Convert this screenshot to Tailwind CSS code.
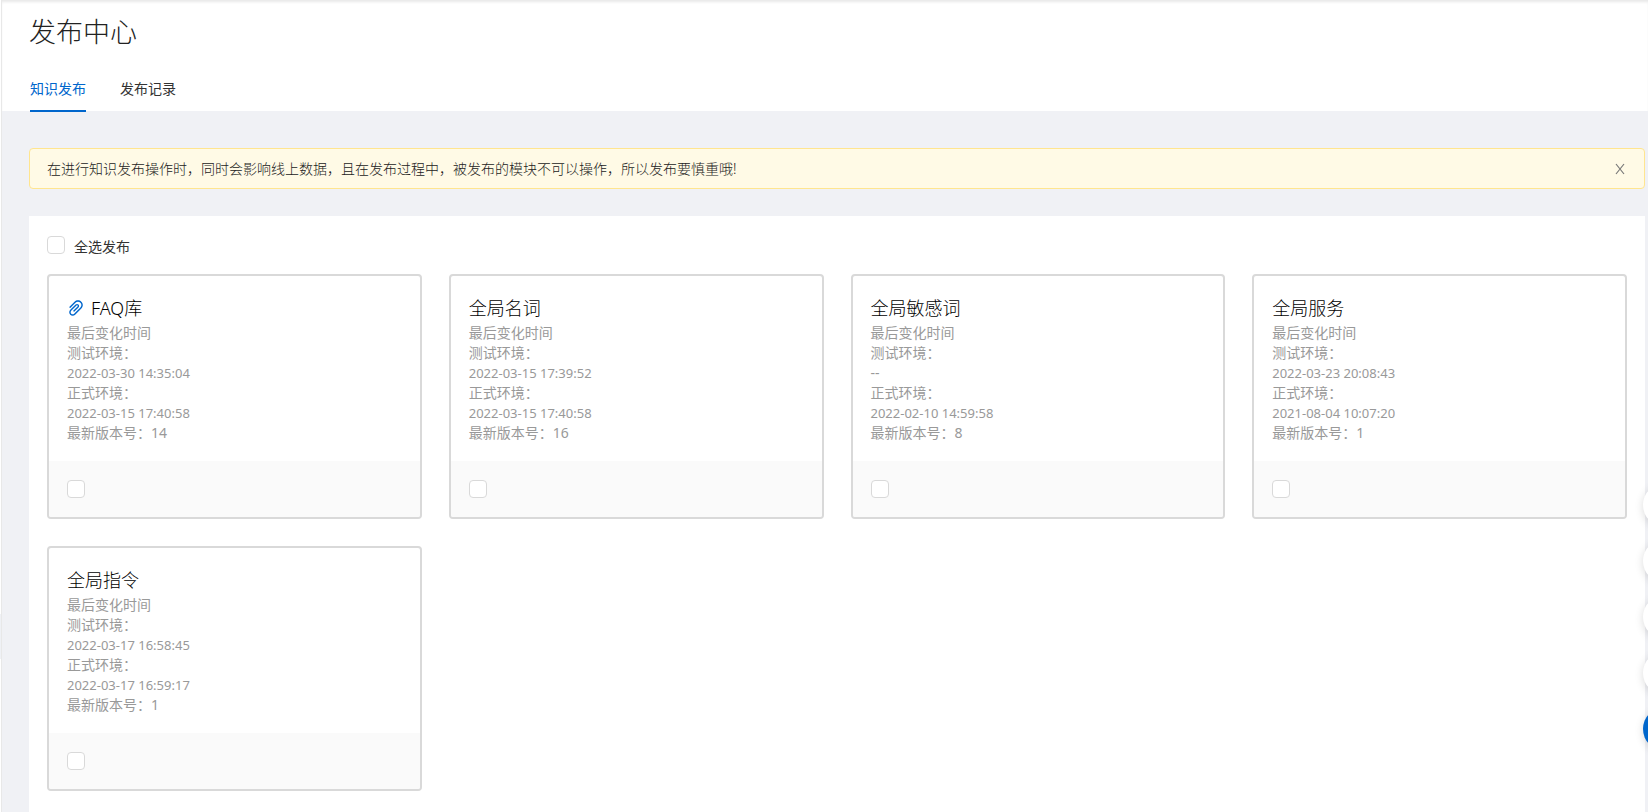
<!DOCTYPE html>
<html lang="zh-CN">
<head>
<meta charset="utf-8">
<title>发布中心</title>
<script src="https://cdn.jsdelivr.net/npm/@tailwindcss/browser@4"></script>
</head>
<body class="relative flex min-h-screen overflow-x-hidden bg-white font-['Noto_Sans','Noto_Sans_CJK_SC',sans-serif] text-sm text-[#333]">
  <!-- collapsed sidebar edge with its handle -->
  <aside class="flex w-0.5 shrink-0 flex-col border-r border-[#e8e8e8] pt-[614px]">
    <div class="h-[45px] bg-[#eff1f5]"></div>
  </aside>

  <div class="flex min-w-0 flex-1 flex-col bg-[#f0f1f5]">
    <header class="bg-white pr-7 pl-[27px] shadow-[inset_0_3px_3px_-1px_#e8e8e8]">
      <h1 class="pt-3 text-[27px] leading-10 font-light text-[#222]">发布中心</h1>
      <nav class="mt-[18px] flex h-[41px] gap-[34px] pl-px">
        <a href="#publish" class="-mb-px h-[42px] border-b-2 border-[#0066cc] pt-[9px] leading-5 text-[#0066cc]">知识发布</a>
        <a href="#records" class="h-[42px] pt-[9px] leading-5">发布记录</a>
      </nav>
    </header>

    <main class="flex flex-1 flex-col gap-[27px] pt-[37px] pr-[3px] pl-[27px]">
      <div role="alert" class="flex h-[41px] items-center justify-between rounded border border-[#ffe58f] bg-[#fffae6] pr-[18px] pl-[17px] text-[#222]">
        <p class="leading-5 font-light">在进行知识发布操作时，同时会影响线上数据，且在发布过程中，被发布的模块不可以操作，所以发布要慎重哦!</p>
        <button type="button" aria-label="关闭" class="text-[#777]">
          <svg class="size-3" viewBox="0 0 12 12" fill="none" stroke="currentColor" stroke-width="1.2"><path d="M2 1l8 10M10 1L2 11"/></svg>
        </button>
      </div>

      <section class="flex-1 bg-white px-[18px] pt-5 pb-5">
        <div class="flex h-[38px] items-start gap-[9px]">
          <input id="all" type="checkbox" class="size-[18px] appearance-none rounded border border-[#d9d9d9] bg-white">
          <label for="all" class="pt-px leading-5">全选发布</label>
        </div>

        <div class="grid grid-cols-4 gap-[27px]">
          <article class="overflow-hidden rounded border-2 border-[#d9d9d9]">
            <div class="px-[18px] py-[18px] leading-5 text-[#999]">
              <h2 class="mb-px flex items-center gap-[6px] text-lg leading-7 font-light text-black">
                <svg class="size-[18px] text-[#0066cc]" viewBox="64 64 896 896" fill="currentColor"><path d="M779.3 196.6c-94.2-94.2-247.6-94.2-341.7 0l-261 260.8c-1.7 1.7-2.6 4-2.6 6.4s.9 4.7 2.6 6.4l36.9 36.9a9 9 0 0 0 12.7 0l261-260.8c32.4-32.4 75.5-50.2 121.3-50.2s88.9 17.8 121.2 50.2c32.4 32.4 50.2 75.5 50.2 121.2 0 45.8-17.8 88.8-50.2 121.2l-266 265.9-43.1 43.1c-40.3 40.3-105.8 40.3-146.1 0-19.5-19.5-30.2-45.4-30.2-73s10.700-53.500 30.200-73l263.900-263.800c6.700-6.600 15.500-10.300 24.900-10.300h.1c9.400 0 18.100 3.700 24.700 10.300 6.700 6.700 10.300 15.500 10.300 24.900 0 9.300-3.700 18.100-10.300 24.700L372.400 653c-1.700 1.700-2.600 4-2.600 6.400s.9 4.700 2.600 6.400l36.900 36.900a9 9 0 0 0 12.700 0l215.600-215.600c19.900-19.900 30.800-46.300 30.800-74.400s-11-54.600-30.800-74.400c-41.100-41.100-107.900-41-149 0L463 364 224.800 602.100A172.220 172.220 0 0 0 174 724.800c0 46.300 18.100 89.800 50.800 122.500 33.900 33.800 78.300 50.700 122.700 50.700 44.400 0 88.800-16.900 122.600-50.700l309.200-309C824.800 492.700 850 432 850 367.500c.1-64.600-25.100-125.300-70.700-170.900z"/></svg>
                FAQ库
              </h2>
              <p>最后变化时间</p>
              <p>测试环境：</p>
              <p class="text-[13px] leading-5">2022-03-30 14:35:04</p>
              <p>正式环境：</p>
              <p class="text-[13px] leading-5">2022-03-15 17:40:58</p>
              <p>最新版本号：14</p>
            </div>
            <div class="flex h-14 items-center bg-[#fafafa] px-[18px]">
              <input type="checkbox" aria-label="FAQ库" class="size-[18px] appearance-none rounded border border-[#d9d9d9] bg-white">
            </div>
          </article>

          <article class="overflow-hidden rounded border-2 border-[#d9d9d9]">
            <div class="px-[18px] py-[18px] leading-5 text-[#999]">
              <h2 class="mb-px text-lg leading-7 font-light text-black">全局名词</h2>
              <p>最后变化时间</p>
              <p>测试环境：</p>
              <p class="text-[13px] leading-5">2022-03-15 17:39:52</p>
              <p>正式环境：</p>
              <p class="text-[13px] leading-5">2022-03-15 17:40:58</p>
              <p>最新版本号：16</p>
            </div>
            <div class="flex h-14 items-center bg-[#fafafa] px-[18px]">
              <input type="checkbox" aria-label="全局名词" class="size-[18px] appearance-none rounded border border-[#d9d9d9] bg-white">
            </div>
          </article>

          <article class="overflow-hidden rounded border-2 border-[#d9d9d9]">
            <div class="px-[18px] py-[18px] leading-5 text-[#999]">
              <h2 class="mb-px text-lg leading-7 font-light text-black">全局敏感词</h2>
              <p>最后变化时间</p>
              <p>测试环境：</p>
              <p>--</p>
              <p>正式环境：</p>
              <p class="text-[13px] leading-5">2022-02-10 14:59:58</p>
              <p>最新版本号：8</p>
            </div>
            <div class="flex h-14 items-center bg-[#fafafa] px-[18px]">
              <input type="checkbox" aria-label="全局敏感词" class="size-[18px] appearance-none rounded border border-[#d9d9d9] bg-white">
            </div>
          </article>

          <article class="overflow-hidden rounded border-2 border-[#d9d9d9]">
            <div class="px-[18px] py-[18px] leading-5 text-[#999]">
              <h2 class="mb-px text-lg leading-7 font-light text-black">全局服务</h2>
              <p>最后变化时间</p>
              <p>测试环境：</p>
              <p class="text-[13px] leading-5">2022-03-23 20:08:43</p>
              <p>正式环境：</p>
              <p class="text-[13px] leading-5">2021-08-04 10:07:20</p>
              <p>最新版本号：1</p>
            </div>
            <div class="flex h-14 items-center bg-[#fafafa] px-[18px]">
              <input type="checkbox" aria-label="全局服务" class="size-[18px] appearance-none rounded border border-[#d9d9d9] bg-white">
            </div>
          </article>

          <article class="overflow-hidden rounded border-2 border-[#d9d9d9]">
            <div class="px-[18px] py-[18px] leading-5 text-[#999]">
              <h2 class="mb-px text-lg leading-7 font-light text-black">全局指令</h2>
              <p>最后变化时间</p>
              <p>测试环境：</p>
              <p class="text-[13px] leading-5">2022-03-17 16:58:45</p>
              <p>正式环境：</p>
              <p class="text-[13px] leading-5">2022-03-17 16:59:17</p>
              <p>最新版本号：1</p>
            </div>
            <div class="flex h-14 items-center bg-[#fafafa] px-[18px]">
              <input type="checkbox" aria-label="全局指令" class="size-[18px] appearance-none rounded border border-[#d9d9d9] bg-white">
            </div>
          </article>
        </div>
      </section>
    </main>
  </div>

  <!-- floating shortcuts tucked against the right edge -->
  <div class="fixed -right-[39px] bottom-[61px] flex flex-col gap-3">
    <button type="button" aria-label="快捷入口一" class="size-11 rounded-full bg-white shadow-[0_2px_8px_rgba(0,0,0,0.15)]"></button>
    <button type="button" aria-label="快捷入口二" class="size-11 rounded-full bg-white shadow-[0_2px_8px_rgba(0,0,0,0.15)]"></button>
    <button type="button" aria-label="快捷入口三" class="size-11 rounded-full bg-white shadow-[0_2px_8px_rgba(0,0,0,0.15)]"></button>
    <button type="button" aria-label="快捷入口四" class="size-11 rounded-full bg-white shadow-[0_2px_8px_rgba(0,0,0,0.15)]"></button>
    <button type="button" aria-label="快捷入口五" class="size-11 rounded-full bg-[#0066cc] shadow-[0_2px_8px_rgba(0,0,0,0.15)]"></button>
  </div>
</body>
</html>
